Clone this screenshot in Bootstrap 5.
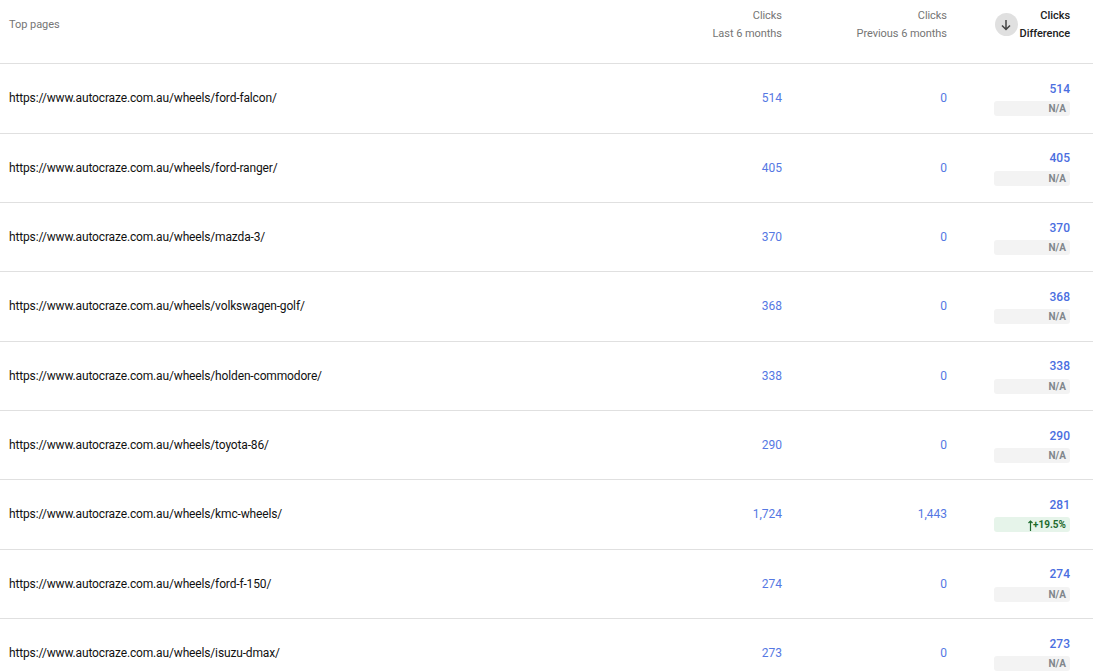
<!DOCTYPE html>
<html lang="en">
<head>
    <meta charset="UTF-8">
    <meta name="viewport" content="width=device-width, initial-scale=1.0">
    <title>Top pages</title>
    <link rel="stylesheet" href="https://cdn.jsdelivr.net/npm/bootstrap@5.3.0/dist/css/bootstrap.min.css">
    <script src="https://cdn.jsdelivr.net/npm/bootstrap@5.3.0/dist/js/bootstrap.bundle.min.js"></script>
    <style>
        html, body {
            height: 671px;
            overflow: hidden;
        }
        body {
            background: #fff;
            font-family: Roboto, sans-serif;
            font-size: 12px;
        }
        .pages {
            table-layout: fixed;
            width: 1093px;
            margin: 0;
            border-collapse: separate;
            border-spacing: 0;
        }
        .pages th, .pages td {
            padding: 0;
            vertical-align: middle;
            border-bottom: 1px solid #e0e0e0;
        }
        .pages thead tr { height: 64.4px; }
        .pages tbody tr { height: 69.33px; }
        .pages th {
            font-weight: 400;
            font-size: 11px;
            line-height: 18px;
            color: #757575;
            letter-spacing: -.05px;
        }
        .pages .col-page { width: 623px; padding-left: 9px; }
        .pages .col-last { width: 159px; }
        .pages .col-prev { width: 165px; }
        .pages .col-diff { padding-right: 23px; }
        .pages thead th { padding-bottom: 14px; }
        .pages td.url { color: #111; padding-left: 9px; padding-bottom: .4px; letter-spacing: -.15px; }
        .pages td.num { color: #5578e3; padding-bottom: .4px; }
        .pages th.sorted { color: #212121; font-weight: 500; }
        .sort-btn {
            width: 23px;
            height: 23px;
            margin-right: 2px;
            background: #e0e0e0;
            color: #444;
        }
        .diff-val {
            color: #4a6ee0;
            font-weight: 500;
            line-height: 16px;
        }
        .chip {
            width: 76px;
            height: 15px;
            margin-top: 4.3px;
            padding-right: 4px;
            font-size: 10px;
            font-weight: 700;
            line-height: 15px;
            border-radius: 3px;
            background: #f3f3f3;
            color: #80868b;
        }
        .chip.up {
            background: #e6f4ea;
            color: #1e6b2e;
        }
    </style>
</head>
<body>

<table class="table pages">
    <thead>
        <tr>
            <th class="col-page">Top pages</th>
            <th class="col-last text-end">Clicks<br>Last 6 months</th>
            <th class="col-prev text-end">Clicks<br>Previous 6 months</th>
            <th class="col-diff text-end sorted">
                <div class="d-flex justify-content-end align-items-center">
                    <span class="sort-btn rounded-circle d-flex align-items-center justify-content-center">
                        <svg width="12" height="12" viewBox="0 0 12 12"><path d="M6 1v9.5M2 6.5l4 4 4-4" fill="none" stroke="currentColor" stroke-width="1.5"/></svg>
                    </span>
                    <span>Clicks<br>Difference</span>
                </div>
            </th>
        </tr>
    </thead>
    <tbody id="rows"></tbody>
</table>

<script>
    const rows = [
        ["ford-falcon", "514", "0", "514"],
        ["ford-ranger", "405", "0", "405"],
        ["mazda-3", "370", "0", "370"],
        ["volkswagen-golf", "368", "0", "368"],
        ["holden-commodore", "338", "0", "338"],
        ["toyota-86", "290", "0", "290"],
        ["kmc-wheels", "1,724", "1,443", "281", "+19.5%"],
        ["ford-f-150", "274", "0", "274"],
        ["isuzu-dmax", "273", "0", "273"]
    ];
    const arrow = '<svg width="5" height="11" viewBox="0 0 5 11"><path d="M2.5 11V1M.5 3l2-2 2 2" fill="none" stroke="currentColor" stroke-width="1.2"/></svg>';
    document.getElementById("rows").innerHTML = rows.map(r => {
        const chip = r[4]
            ? `<div class="chip up ms-auto text-end">${arrow}${r[4]}</div>`
            : `<div class="chip ms-auto text-end">N/A</div>`;
        return `<tr>
            <td class="url">https://www.autocraze.com.au/wheels/${r[0]}/</td>
            <td class="num text-end">${r[1]}</td>
            <td class="num text-end">${r[2]}</td>
            <td class="col-diff text-end"><div class="diff-val">${r[3]}</div>${chip}</td>
        </tr>`;
    }).join("");
</script>

</body>
</html>
